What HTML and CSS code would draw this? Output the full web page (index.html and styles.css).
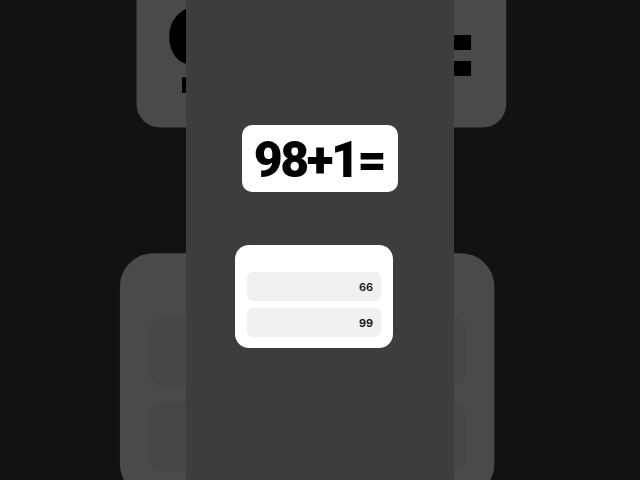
FILE: index.html
```html
<!DOCTYPE html>
<html>
<head>
<meta charset="utf-8">
<link rel="stylesheet" href="styles.css">
</head>
<body>
<div class="stage">
  <div class="backdrop" aria-hidden="true">
    <div class="video">
      <div class="question"><span class="q-text">98+1=</span></div>
      <div class="answers">
        <div class="option">66</div>
        <div class="option">99</div>
      </div>
    </div>
  </div>
  <div class="player">
    <div class="video">
      <div class="question"><span class="q-text">98+1=</span></div>
      <div class="answers">
        <div class="option">66</div>
        <div class="option">99</div>
      </div>
    </div>
  </div>
</div>
</body>
</html>
```
FILE: styles.css
```css
html, body {
  margin: 0;
  padding: 0;
  background: #121212;
  overflow: hidden;
}
.stage {
  position: relative;
  width: 640px;
  height: 480px;
  overflow: hidden;
  display: flex;
  justify-content: center;
  font-family: Inter, "Liberation Sans", sans-serif;
}
.backdrop {
  position: absolute;
  inset: 0;
  display: flex;
  justify-content: center;
  transform: scale(2.37);
  transform-origin: 319px 239px;
  filter: brightness(0.29);
}
.player {
  position: relative;
  display: flex;
}
.video {
  width: 268px;
  height: 480px;
  background: #3d3d3d;
  box-sizing: border-box;
  padding-top: 125px;
  display: flex;
  flex-direction: column;
  align-items: flex-start;
}
.question {
  margin-left: 56px;
  width: 156px;
  height: 67px;
  background: #fff;
  border-radius: 10px;
  display: flex;
  align-items: center;
  justify-content: center;
}
.q-text {
  font-family: Roboto, "Liberation Sans", sans-serif;
  font-size: 50px;
  font-weight: 900;
  color: #000;
  letter-spacing: -2.5px;
  line-height: 1;
  padding-top: 2px;
  padding-right: 2px;
}
.answers {
  margin-top: 53px;
  margin-left: 49px;
  width: 158px;
  box-sizing: border-box;
  background: #fff;
  border-radius: 14px;
  padding: 27px 12px 11px;
  display: flex;
  flex-direction: column;
  gap: 7px;
}
.option {
  height: 29px;
  background: #f0f0f0;
  border-radius: 6px;
  display: flex;
  align-items: center;
  justify-content: flex-end;
  padding-right: 8px;
  font-size: 11px;
  font-weight: 600;
  color: #111;
}
```
